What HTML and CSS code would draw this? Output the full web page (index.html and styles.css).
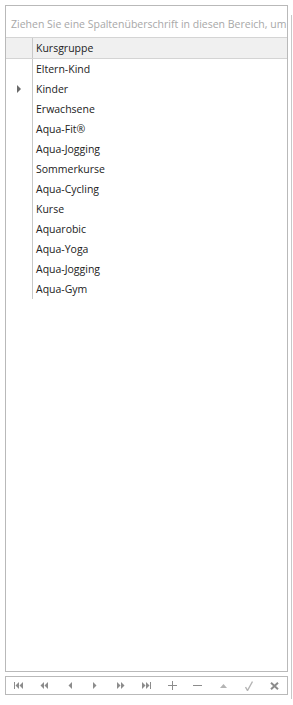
FILE: index.html
```html
<!DOCTYPE html>
<html lang="de">
<head>
    <meta charset="UTF-8">
    <meta name="viewport" content="width=device-width, initial-scale=1.0">
    <title>Kursgruppen</title>
    <link rel="stylesheet" href="styles.css">
</head>
<body>
    <div class="frame">
        <div class="main">
            <div class="grid">
                <div class="group-panel">Ziehen Sie eine Spaltenüberschrift in diesen Bereich, um nach dieser Spalte zu gruppieren</div>
                <div class="header">
                    <div class="indicator"></div>
                    <div class="col">Kursgruppe</div>
                </div>
                <div class="rows">
                    <div class="row"><div class="indicator"></div><div class="cell">Eltern-Kind</div></div>
                    <div class="row"><div class="indicator"><span class="current"></span></div><div class="cell">Kinder</div></div>
                    <div class="row"><div class="indicator"></div><div class="cell">Erwachsene</div></div>
                    <div class="row"><div class="indicator"></div><div class="cell">Aqua-Fit®</div></div>
                    <div class="row"><div class="indicator"></div><div class="cell">Aqua-Jogging</div></div>
                    <div class="row"><div class="indicator"></div><div class="cell">Sommerkurse</div></div>
                    <div class="row"><div class="indicator"></div><div class="cell">Aqua-Cycling</div></div>
                    <div class="row"><div class="indicator"></div><div class="cell">Kurse</div></div>
                    <div class="row"><div class="indicator"></div><div class="cell">Aquarobic</div></div>
                    <div class="row"><div class="indicator"></div><div class="cell">Aqua-Yoga</div></div>
                    <div class="row"><div class="indicator"></div><div class="cell">Aqua-Jogging</div></div>
                    <div class="row"><div class="indicator"></div><div class="cell">Aqua-Gym</div></div>
                </div>
            </div>
            <div class="navigator">
                <!-- first -->
                <button class="nav-btn" title="Erster">
                    <svg width="9" height="7" viewBox="0 0 9 7"><rect x="0" y="0" width="1" height="7"/><polygon points="5,0 5,7 1.5,3.5"/><polygon points="9,0 9,7 5.5,3.5"/></svg>
                </button>
                <!-- previous page -->
                <button class="nav-btn" title="Vorherige Seite">
                    <svg width="8" height="7" viewBox="0 0 8 7"><polygon points="4,0 4,7 0.5,3.5"/><polygon points="8,0 8,7 4.5,3.5"/></svg>
                </button>
                <!-- previous -->
                <button class="nav-btn" title="Vorheriger">
                    <svg width="4" height="7" viewBox="0 0 4 7"><polygon points="4,0 4,7 0.5,3.5"/></svg>
                </button>
                <!-- next -->
                <button class="nav-btn" title="Nächster">
                    <svg width="4" height="7" viewBox="0 0 4 7"><polygon points="0,0 0,7 3.5,3.5"/></svg>
                </button>
                <!-- next page -->
                <button class="nav-btn" title="Nächste Seite">
                    <svg width="8" height="7" viewBox="0 0 8 7"><polygon points="0,0 0,7 3.5,3.5"/><polygon points="4,0 4,7 7.5,3.5"/></svg>
                </button>
                <!-- last -->
                <button class="nav-btn" title="Letzter">
                    <svg width="9" height="7" viewBox="0 0 9 7"><polygon points="0,0 0,7 3.5,3.5"/><polygon points="4,0 4,7 7.5,3.5"/><rect x="8" y="0" width="1" height="7"/></svg>
                </button>
                <!-- append -->
                <button class="nav-btn" title="Hinzufügen">
                    <svg width="9" height="9" viewBox="0 0 9 9"><rect x="4" y="0" width="1" height="9"/><rect x="0" y="4" width="9" height="1"/></svg>
                </button>
                <!-- remove -->
                <button class="nav-btn" title="Löschen">
                    <svg width="9" height="9" viewBox="0 0 9 9"><rect x="0" y="4" width="9" height="1"/></svg>
                </button>
                <!-- edit -->
                <button class="nav-btn light" title="Bearbeiten">
                    <svg width="7" height="4" viewBox="0 0 7 4"><polygon points="0,4 7,4 3.5,0"/></svg>
                </button>
                <!-- end edit -->
                <button class="nav-btn light" title="Übernehmen">
                    <svg width="8" height="10" viewBox="0 0 8 10"><path d="M0.5 6 L2.5 9.5 L7.5 0.5" fill="none" stroke-width="1.4"/></svg>
                </button>
                <!-- cancel -->
                <button class="nav-btn" title="Abbrechen">
                    <svg width="9" height="8" viewBox="0 0 9 8"><path d="M1 0.8 L8 7.2 M8 0.8 L1 7.2" fill="none" stroke-width="2"/></svg>
                </button>
            </div>
        </div>
        <div class="side-line"></div>
    </div>
</body>
</html>
```

FILE: styles.css
```css
body {
    margin: 0;
    background: #ffffff;
    font-family: 'Open Sans', 'Noto Sans', sans-serif;
    font-size: 10.5px;
    color: #222222;
}
.frame {
    display: flex;
    padding: 5px 0 0 5px;
}
.main {
    width: 283px;
    display: flex;
    flex-direction: column;
}
.side-line {
    margin: 10px 0 0 3px;
    width: 0;
    height: 684px;
    border-left: 1px solid #c8c8c8;
}
.grid {
    height: 665px;
    border: 1px solid #b9b9b9;
    display: flex;
    flex-direction: column;
    overflow: hidden;
}
.group-panel {
    height: 26px;
    line-height: 26px;
    padding: 5px 0 0 5px;
    color: #a8a8a8;
    white-space: nowrap;
    overflow: hidden;
    border-bottom: 1px solid #d4d4d4;
}
.header {
    display: flex;
    height: 20px;
    background: #f0f0f0;
    border-bottom: 1px solid #d4d4d4;
}
.indicator {
    width: 26px;
    flex: none;
    border-right: 1px solid #c8c8c8;
    display: flex;
    align-items: center;
    justify-content: center;
}
.col, .cell {
    padding-left: 3px;
    line-height: 20px;
}
.row {
    display: flex;
    height: 20px;
}
.current {
    width: 0;
    height: 0;
    border-top: 4px solid transparent;
    border-bottom: 4px solid transparent;
    border-left: 4px solid #6a6a6a;
    margin-left: -1px;
}
.navigator {
    margin-top: 4px;
    height: 17px;
    border: 1px solid #b9b9b9;
    display: flex;
}
.nav-btn {
    flex: 1;
    padding: 0;
    border: none;
    background: none;
    display: flex;
    align-items: center;
    justify-content: center;
    fill: #8c8c8c;
    stroke: #8c8c8c;
}
.nav-btn svg rect, .nav-btn svg polygon {
    stroke: none;
}
.nav-btn.light {
    fill: #b4b4b4;
    stroke: #b4b4b4;
}
```
